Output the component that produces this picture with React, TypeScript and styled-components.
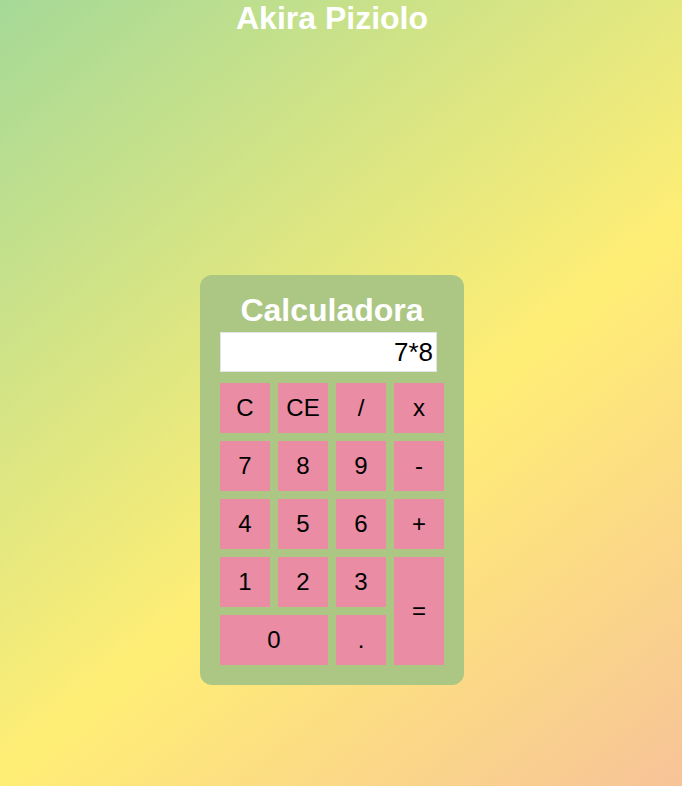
import React, { useState } from 'react';
import styled, { createGlobalStyle } from 'styled-components';

const GlobalStyle = createGlobalStyle`
  html, body {
    margin: 0;
    padding: 0;
  }
  body {
    min-height: 786px;
    font-family: "Liberation Sans", Arial, sans-serif;
    background: linear-gradient(141deg, #a5d997 0%, #ffee75 58%, #f7c398 100%);
    background-attachment: fixed;
  }
`;

const Page = styled.div`
  display: flex;
  flex-direction: column;
  align-items: center;
  padding-right: 18px;
`;

const Heading = styled.h1`
  margin: 0;
  font-size: 32px;
  font-weight: bold;
  color: #fff;
`;

const Card = styled.div`
  margin-top: 238px;
  padding: 17px 20px 20px;
  background: #acc784;
  border-radius: 12px;
  display: flex;
  flex-direction: column;
  align-items: flex-start;
`;

const Title = styled.h2`
  align-self: stretch;
  margin: 0 0 3px;
  font-size: 32px;
  font-weight: bold;
  color: #fff;
  text-align: center;
`;

const Display = styled.input`
  box-sizing: border-box;
  width: 217px;
  height: 40px;
  margin-bottom: 11px;
  padding: 0 3px;
  border: 1px solid #e4e4e4;
  background: #fff;
  font-family: "Liberation Sans", Arial, sans-serif;
  font-size: 26px;
  color: #000;
  text-align: right;
  outline: none;
`;

const Keys = styled.div`
  display: grid;
  grid-template-columns: repeat(4, 50px);
  grid-auto-rows: 50px;
  gap: 8px;
`;

const Key = styled.button<{ $wide?: boolean; $tall?: boolean }>`
  border: none;
  margin: 0;
  padding: 0;
  background: #e98ca4;
  font-family: "Liberation Sans", Arial, sans-serif;
  font-size: 24px;
  color: #000;
  cursor: pointer;
  grid-column: ${(p) => (p.$wide ? 'span 2' : 'auto')};
  grid-row: ${(p) => (p.$tall ? 'span 2' : 'auto')};
`;

const keys: { label: string; wide?: boolean; tall?: boolean }[] = [
  { label: 'C' },
  { label: 'CE' },
  { label: '/' },
  { label: 'x' },
  { label: '7' },
  { label: '8' },
  { label: '9' },
  { label: '-' },
  { label: '4' },
  { label: '5' },
  { label: '6' },
  { label: '+' },
  { label: '1' },
  { label: '2' },
  { label: '3' },
  { label: '=', tall: true },
  { label: '0', wide: true },
  { label: '.' },
];

const App = () => {
  const [value, setValue] = useState('7*8');

  const press = (k: string) => {
    if (k === 'C') return setValue('');
    if (k === 'CE') return setValue((v) => v.slice(0, -1));
    if (k === '=') {
      try {
        // eslint-disable-next-line no-new-func
        const r = Function(`return (${value.replace(/x/g, '*')})`)();
        setValue(String(r));
      } catch {
        setValue('Erro');
      }
      return;
    }
    setValue((v) => v + (k === 'x' ? '*' : k));
  };

  return (
    <>
      <GlobalStyle />
      <Page>
        <Heading>Akira Piziolo</Heading>
        <Card>
          <Title>Calculadora</Title>
          <Display value={value} readOnly />
          <Keys>
            {keys.map((k) => (
              <Key key={k.label} $wide={k.wide} $tall={k.tall} onClick={() => press(k.label)}>
                {k.label}
              </Key>
            ))}
          </Keys>
        </Card>
      </Page>
    </>
  );
};

export default App;
